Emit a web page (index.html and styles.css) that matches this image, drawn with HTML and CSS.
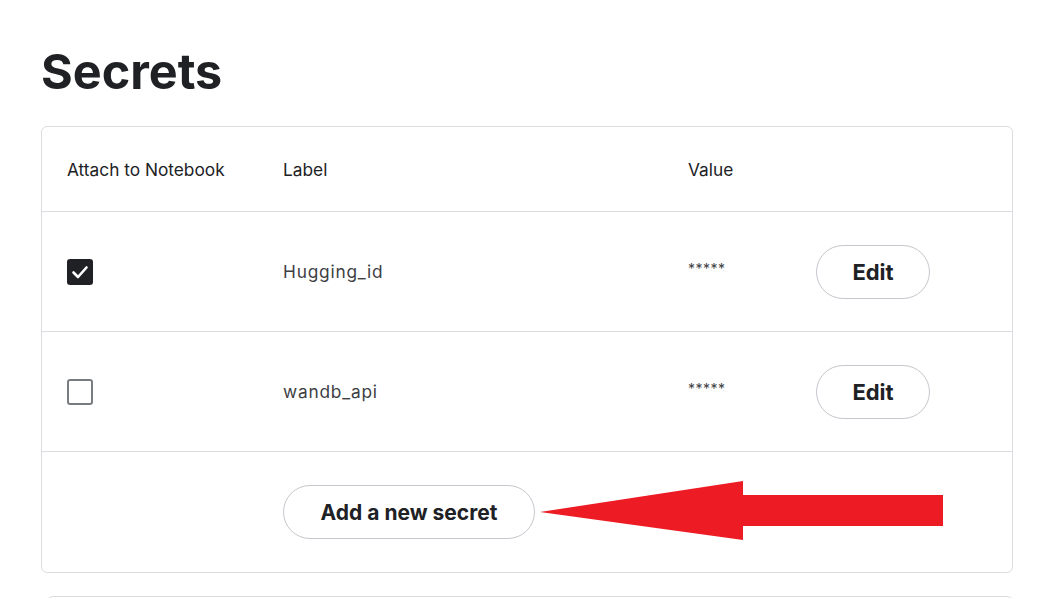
FILE: index.html
```html
<!DOCTYPE html>
<html>
<head>
<meta charset="utf-8">
<link rel="stylesheet" href="styles.css">
</head>
<body>
<div class="page">
  <h1 class="title">Secrets</h1>
  <div class="card">
    <div class="row head">
      <div class="cell c1">Attach to Notebook</div>
      <div class="cell">Label</div>
      <div class="cell">Value</div>
      <div class="cell"></div>
    </div>
    <div class="row">
      <div class="cell c1"><span class="cb checked"><svg viewBox="0 0 26 26" width="26" height="26"><path d="M6.5 13.5 L11 18 L19.5 8.5" fill="none" stroke="#fff" stroke-width="2.6" stroke-linecap="round" stroke-linejoin="round"/></svg></span></div>
      <div class="cell label">Hugging_id</div>
      <div class="cell value">*****</div>
      <div class="cell"><button class="btn edit">Edit</button></div>
    </div>
    <div class="row">
      <div class="cell c1"><span class="cb"></span></div>
      <div class="cell label">wandb_api</div>
      <div class="cell value">*****</div>
      <div class="cell"><button class="btn edit">Edit</button></div>
    </div>
    <div class="row last">
      <div class="cell c1"></div>
      <div class="cell"><button class="btn add">Add a new secret</button></div>
      <div class="cell"></div>
      <div class="cell"></div>
    </div>
    <svg class="arrow" width="410" height="62" viewBox="0 0 410 62"><polygon points="0,31 203,0 203,14 403,14 403,45 203,45 203,59" fill="#ed1c24"/></svg>
  </div>
  <div class="next"></div>
</div>
</body>
</html>
```
FILE: styles.css
```css
html, body {
  margin: 0;
  padding: 0;
  background: #fff;
}
body {
  font-family: Inter, "Noto Sans", sans-serif;
  color: #202124;
}
.page {
  padding: 0 37px 0 41px;
}
.title {
  margin: 0;
  padding-top: 42px;
  height: 126px;
  box-sizing: border-box;
  font-size: 48.5px;
  line-height: 60px;
  font-weight: 700;
  color: #202124;
}
.card {
  position: relative;
  border: 1px solid #dadce0;
  border-radius: 6px;
}
.row {
  display: grid;
  grid-template-columns: 241px 405px 128px 1fr;
  height: 119px;
  border-bottom: 1px solid #dadce0;
  align-items: center;
}
.row.head {
  height: 84px;
}
.row.last {
  border-bottom: none;
  height: 120px;
}
.cell {
  font-size: 17.3px;
  color: #3c4043;
}
.head .cell {
  color: #202124;
}
.c1 {
  padding-left: 25px;
  display: flex;
  align-items: center;
}
.label {
  letter-spacing: 0.8px;
  color: #3c4043;
}
.value {
  font-size: 14px;
  letter-spacing: 0.5px;
  margin-top: -6px;
}
.cb {
  width: 26px;
  height: 26px;
  box-sizing: border-box;
  border: 2px solid #787c80;
  border-radius: 3px;
  display: block;
}
.cb.checked {
  border: none;
  background: #202124;
}
.cb svg {
  display: block;
}
.btn {
  font-family: Inter, "Noto Sans", sans-serif;
  font-weight: 700;
  font-size: 21px;
  color: #202124;
  background: #fff;
  border: 1px solid #c4c7cc;
  border-radius: 27px;
  height: 54px;
  padding: 0;
  cursor: pointer;
}
.btn.edit {
  width: 114px;
  font-size: 22px;
}
.btn.add {
  width: 252px;
}
.arrow {
  position: absolute;
  left: 498px;
  top: 354px;
}
.next {
  margin: 23px 0 0 6px;
  height: 20px;
  border: 1px solid #dadce0;
  border-bottom: none;
  border-radius: 6px 6px 0 0;
}
```
